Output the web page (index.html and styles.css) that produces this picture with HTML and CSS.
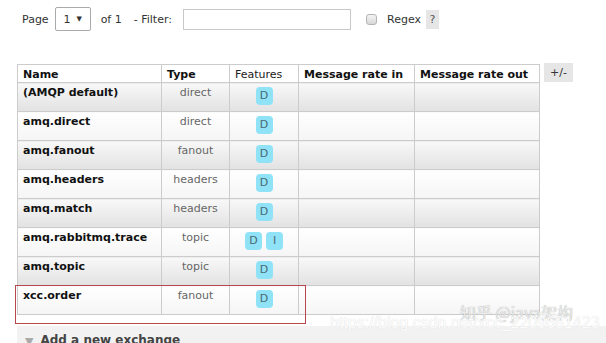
FILE: index.html
```html
<!DOCTYPE html>
<html lang="en">
  <head>
    <meta charset="UTF-8" />
    <meta name="viewport" content="width=device-width, initial-scale=1.0" />
    <title>Exchanges</title>
    <link rel="stylesheet" href="styles.css">
  </head>

  <body>
    <!-- Paging and filter bar -->
    <div class="toolbar">
      <span>Page</span>
      <span class="select">1 <span class="arrow">&#9660;</span></span>
      <span class="of">of 1</span>
      <span class="filter-label">- Filter:</span>
      <span class="filter-input"></span>
      <span class="checkbox"></span>
      <span class="regex">Regex</span>
      <span class="help">?</span>
    </div>

    <!-- Exchanges table -->
    <div class="table-wrap">
      <table class="list">
        <colgroup>
          <col class="c-name">
          <col class="c-type">
          <col class="c-feat">
          <col class="c-in">
          <col class="c-out">
        </colgroup>
        <thead>
          <tr>
            <th>Name</th>
            <th>Type</th>
            <th class="normal">Features</th>
            <th>Message rate in</th>
            <th>Message rate out</th>
          </tr>
        </thead>
        <tbody>
          <tr class="alt1">
            <td class="name">(AMQP default)</td>
            <td class="type">direct</td>
            <td class="feat"><abbr class="tag">D</abbr></td>
            <td></td>
            <td></td>
          </tr>
          <tr class="alt2">
            <td class="name">amq.direct</td>
            <td class="type">direct</td>
            <td class="feat"><abbr class="tag">D</abbr></td>
            <td></td>
            <td></td>
          </tr>
          <tr class="alt1">
            <td class="name">amq.fanout</td>
            <td class="type">fanout</td>
            <td class="feat"><abbr class="tag">D</abbr></td>
            <td></td>
            <td></td>
          </tr>
          <tr class="alt2">
            <td class="name">amq.headers</td>
            <td class="type">headers</td>
            <td class="feat"><abbr class="tag">D</abbr></td>
            <td></td>
            <td></td>
          </tr>
          <tr class="alt1">
            <td class="name">amq.match</td>
            <td class="type">headers</td>
            <td class="feat"><abbr class="tag">D</abbr></td>
            <td></td>
            <td></td>
          </tr>
          <tr class="alt2">
            <td class="name">amq.rabbitmq.trace</td>
            <td class="type">topic</td>
            <td class="feat"><abbr class="tag">D</abbr><abbr class="tag">I</abbr></td>
            <td></td>
            <td></td>
          </tr>
          <tr class="alt1">
            <td class="name">amq.topic</td>
            <td class="type">topic</td>
            <td class="feat"><abbr class="tag">D</abbr></td>
            <td></td>
            <td></td>
          </tr>
          <tr class="alt2">
            <td class="name">xcc.order</td>
            <td class="type">fanout</td>
            <td class="feat"><abbr class="tag">D</abbr></td>
            <td></td>
            <td></td>
          </tr>
        </tbody>
      </table>
      <span class="toggle">+/-</span>

      <!-- Highlight drawn over the last row -->
      <div class="highlight"></div>
    </div>

    <!-- Collapsed section -->
    <div class="section-head">
      <span class="tri">&#9660;</span>
      <span>Add a new exchange</span>
    </div>

    <!-- Watermarks -->
    <div class="mark-zh">知乎 @java架构</div>
    <div class="mark-url">https://blog.csdn.net/xcc_2209681423</div>
  </body>
</html>
```

FILE: styles.css
```css
/* Base */
body {
  font-family: "DejaVu Sans", Verdana, sans-serif;
  font-size: 11px;
  color: #222;
  margin: 0;
  padding: 0;
  background-color: #fff;
  position: relative;
  height: 343px;
  overflow: hidden;
}

/* Paging / filter bar */
.toolbar {
  display: flex;
  align-items: center;
  height: 24px;
  margin-top: 7px;
  padding-left: 22px;
  color: #333;
}

.select {
  margin-left: 6px;
  width: 36px;
  height: 24px;
  box-sizing: border-box;
  border: 1px solid #aaa;
  border-radius: 2px;
  display: flex;
  align-items: center;
  justify-content: center;
  gap: 6px;
}

.select .arrow {
  font-size: 7px;
}

.of {
  margin-left: 10px;
}

.filter-label {
  margin-left: 12px;
}

.filter-input {
  margin-left: 11px;
  width: 168px;
  height: 21px;
  box-sizing: border-box;
  border: 1px solid #c8c8c8;
}

.checkbox {
  margin-left: 15px;
  width: 11px;
  height: 11px;
  box-sizing: border-box;
  border: 1px solid #b4b4b4;
  border-radius: 3px;
  background: linear-gradient(to bottom, #f4f4f4, #d8d8d8);
}

.regex {
  margin-left: 10px;
}

.help {
  margin-left: 5px;
  width: 13px;
  height: 19px;
  background-color: #e6e6e6;
  color: #555;
  display: flex;
  align-items: center;
  justify-content: center;
}

/* Table area */
.table-wrap {
  position: relative;
  display: flex;
  align-items: flex-start;
  gap: 4px;
  margin-top: 33px;
  padding-left: 17px;
}

.list {
  border-collapse: collapse;
  table-layout: fixed;
  width: 523px;
}

.c-name { width: 144px; }
.c-type { width: 68px; }
.c-feat { width: 69px; }
.c-in { width: 116px; }
.c-out { width: 125px; }

.list th,
.list td {
  border: 1px solid #ccc;
  padding: 3px 5px 0;
  vertical-align: top;
  text-align: left;
  line-height: 13px;
}

.list th {
  height: 14px;
  font-weight: bold;
  color: #111;
  background-color: #fff;
  white-space: nowrap;
}

.list th.normal {
  font-weight: normal;
  color: #222;
}

.list td {
  height: 24px;
}

.list tr.alt1 td {
  background: linear-gradient(to bottom, #f8f8f8, #e2e2e2);
}

.list tr.alt2 td {
  background: linear-gradient(to bottom, #fff, #f5f5f5);
}

.list td.name {
  font-weight: bold;
  color: #111;
  white-space: nowrap;
}

.list td.type {
  text-align: center;
  color: #666;
}

.list td.feat {
  text-align: center;
  padding-top: 4px;
}

.tag {
  display: inline-block;
  width: 17px;
  height: 18px;
  line-height: 18px;
  margin: 0 2px;
  border-radius: 4px;
  background-color: #90e2f6;
  color: #4a6a74;
  text-decoration: none;
  text-align: center;
}

.toggle {
  margin-top: -1px;
  padding: 3px 6px;
  line-height: 13px;
  background-color: #e6e6e6;
  color: #333;
}

.highlight {
  position: absolute;
  left: 15px;
  top: 221px;
  width: 289px;
  height: 37px;
  border: 1px solid #b5484c;
}

/* Collapsed section header */
.section-head {
  margin-top: 11px;
  margin-left: 17px;
  padding: 7px 0 0 8px;
  height: 20px;
  background-color: #f2f2f2;
  font-size: 12px;
  font-weight: bold;
  color: #444;
  display: flex;
  gap: 7px;
}

.section-head .tri {
  font-size: 11px;
  color: #aaa;
  padding-top: 2px;
}

/* Watermarks over the picture */
.mark-zh {
  position: absolute;
  left: 460px;
  top: 300px;
  font-family: "Noto Sans CJK SC", sans-serif;
  font-size: 16px;
  color: #ececec;
  text-shadow: 0 0 1px #999;
}

.mark-url {
  position: absolute;
  left: 330px;
  top: 314px;
  font-family: "Liberation Sans", sans-serif;
  font-size: 16px;
  color: #fcfcfc;
  text-shadow: 0 0 1px #d4d4d4;
}
```
